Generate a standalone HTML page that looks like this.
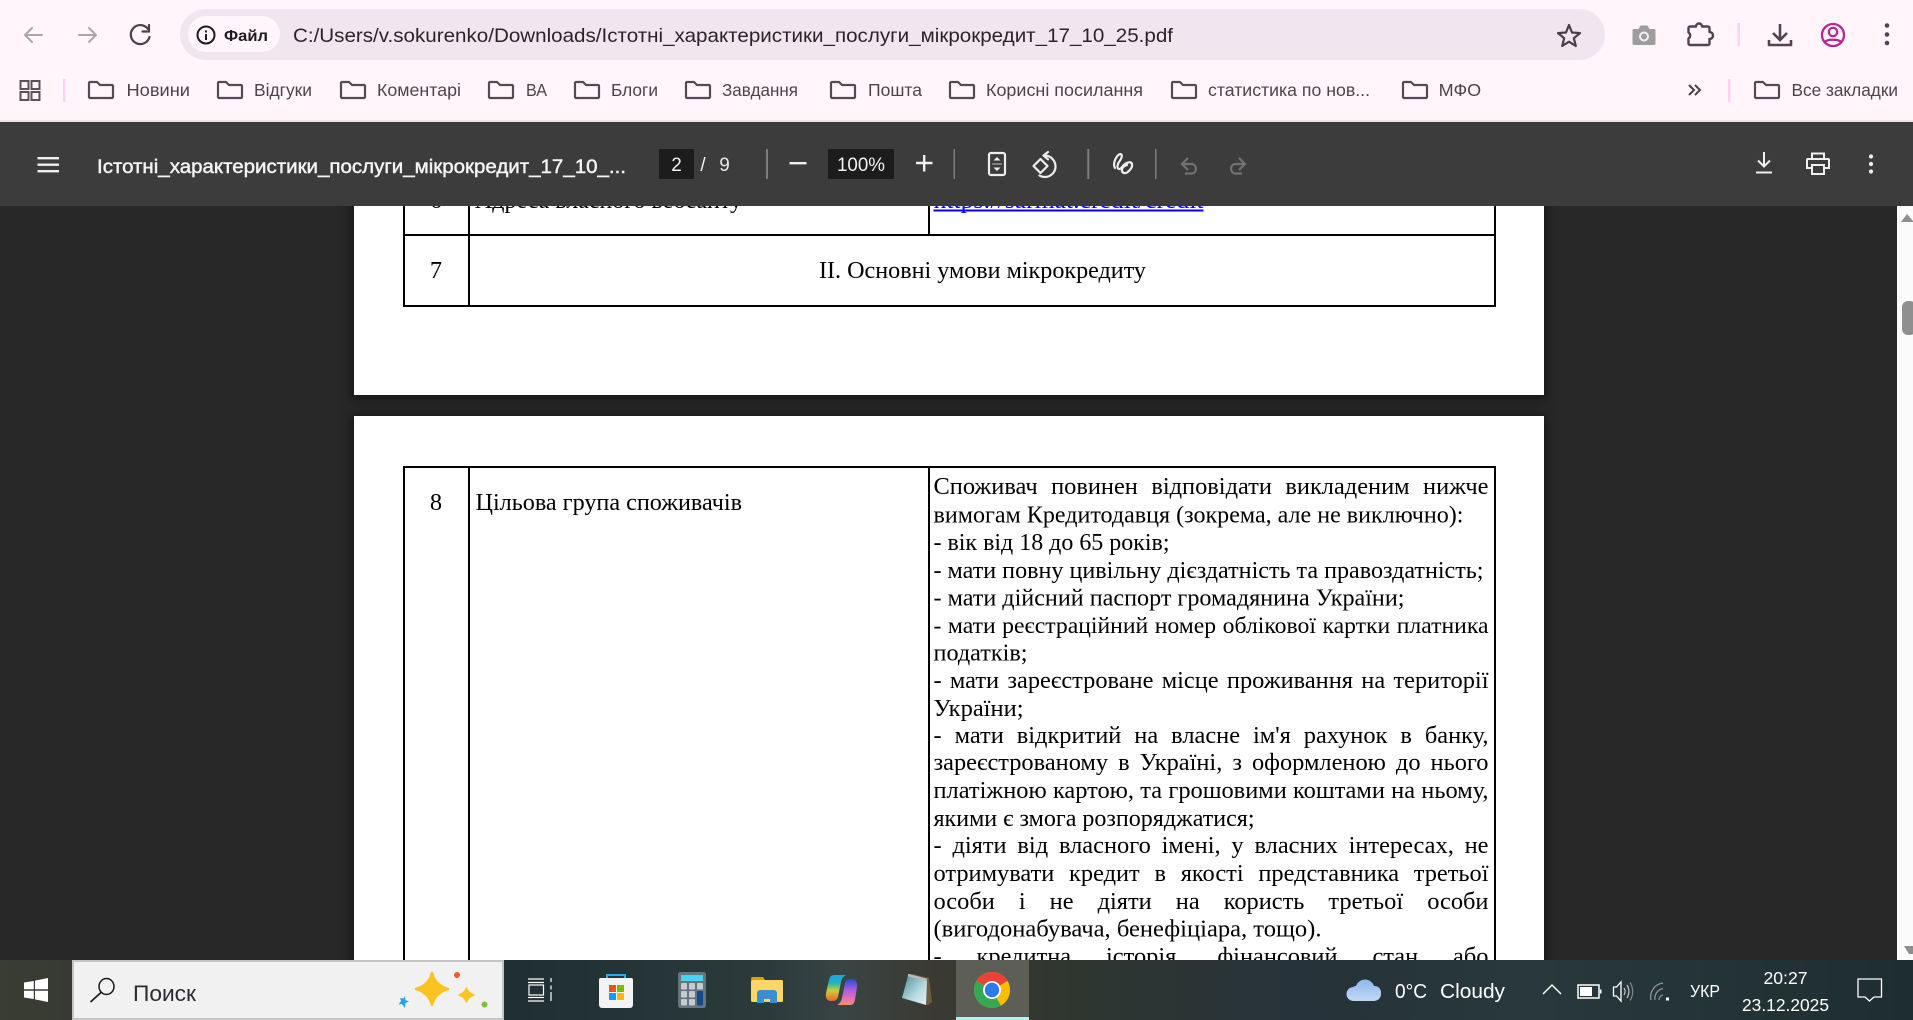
<!DOCTYPE html>
<html lang="uk"><head><meta charset="utf-8"><title>PDF</title>
<style>
html,body{margin:0;padding:0;width:1913px;height:1020px;overflow:hidden;background:#282828}
#pdf{position:absolute;left:0;top:0;width:1913px;height:1020px;overflow:hidden;background:#282828}
.page{position:absolute;left:354px;width:1190px;background:#fff;box-shadow:0 2px 10px 3px rgba(0,0,0,.45)}
.b{position:absolute;background:#000}
.j{position:absolute;left:933.5px;width:555px;height:28px;line-height:28px;font:24.4px/28px "Liberation Serif",serif;color:#000;text-align:justify;text-align-last:justify;white-space:nowrap}
svg{position:absolute;left:0;top:0;overflow:hidden}
.s{font-family:"Liberation Serif",serif;font-size:24.4px;fill:#000}
.u{font-family:"Liberation Sans",sans-serif}
.bm{font-size:17.5px;fill:#4f4348}
.f{fill:none;stroke:#564a50;stroke-width:2.2;stroke-linejoin:round}
</style></head><body>
<div id="pdf">
<div class="page" style="top:0;height:395px"></div>
<div class="page" style="top:416px;height:604px"></div>
<!-- table 1 -->
<div class="b" style="left:403px;top:190px;width:2px;height:117px"></div>
<div class="b" style="left:468px;top:190px;width:2px;height:117px"></div>
<div class="b" style="left:928px;top:190px;width:2px;height:45px"></div>
<div class="b" style="left:1494px;top:190px;width:2px;height:117px"></div>
<div class="b" style="left:403px;top:234px;width:1093px;height:2px"></div>
<div class="b" style="left:403px;top:305px;width:1093px;height:2px"></div>
<!-- table 2 -->
<div class="b" style="left:403px;top:466px;width:1093px;height:2px"></div>
<div class="b" style="left:403px;top:466px;width:2px;height:500px"></div>
<div class="b" style="left:468px;top:466px;width:2px;height:500px"></div>
<div class="b" style="left:928px;top:466px;width:2px;height:500px"></div>
<div class="b" style="left:1494px;top:466px;width:2px;height:500px"></div>
<div class="j" style="top:473px">Споживач повинен відповідати викладеним нижче</div>
<div class="j" style="top:611.5px;font-size:23.7px">- мати реєстраційний номер облікової картки платника</div>
<div class="j" style="top:666.5px">- мати зареєстроване місце проживання на території</div>
<div class="j" style="top:721.7px">- мати відкритий на власне ім'я рахунок в банку,</div>
<div class="j" style="top:749.3px">зареєстрованому в Україні, з оформленою до нього</div>
<div class="j" style="top:776.9px">платіжною картою, та грошовими коштами на ньому,</div>
<div class="j" style="top:832.4px">- діяти від власного імені, у власних інтересах, не</div>
<div class="j" style="top:860px">отримувати кредит в якості представника третьої</div>
<div class="j" style="top:887.5px">особи і не діяти на користь третьої особи</div>
<div class="j" style="top:942.5px">- кредитна історія, фінансовий стан або</div>
<!-- scrollbar -->
<div style="position:absolute;left:1897px;top:206px;width:16px;height:760px;background:#fbfbfb"></div>
<div style="position:absolute;left:1902px;top:301px;width:14px;height:34px;border-radius:6px;background:#8f8f8f"></div>
</div>

<svg width="1913" height="1020" viewBox="0 0 1913 1020" xmlns="http://www.w3.org/2000/svg">
<defs>
<linearGradient id="tb" x1="0" x2="1" y1="0" y2="0">
<stop offset="0" stop-color="#3a3d33"/><stop offset=".04" stop-color="#363a32"/><stop offset=".27" stop-color="#1f2f32"/><stop offset=".4" stop-color="#2c3a3b"/><stop offset=".44" stop-color="#394444"/><stop offset=".49" stop-color="#3a3a32"/><stop offset=".56" stop-color="#2f3630"/><stop offset=".68" stop-color="#26333a"/><stop offset=".8" stop-color="#28383c"/><stop offset="1" stop-color="#1e2e30"/>
</linearGradient>
<linearGradient id="cl" x1="0" x2="0" y1="0" y2="1"><stop offset="0" stop-color="#8db8ef"/><stop offset="1" stop-color="#c2d8f3"/></linearGradient>
<linearGradient id="cp" x1="0" x2="0" y1="0" y2="1"><stop offset="0" stop-color="#2050d0"/><stop offset=".4" stop-color="#a85be0"/><stop offset=".75" stop-color="#e66fb8"/><stop offset="1" stop-color="#f7906a"/></linearGradient>
<linearGradient id="cp2" x1="0" x2="0" y1="0" y2="1"><stop offset="0" stop-color="#1aa7e8"/><stop offset=".3" stop-color="#20b0c0"/><stop offset=".6" stop-color="#c8d030"/><stop offset="1" stop-color="#f0652f"/></linearGradient>
<linearGradient id="np" x1="0" x2="1" y1="0" y2="1"><stop offset="0" stop-color="#4f8c9a"/><stop offset=".6" stop-color="#b6dbe0"/><stop offset="1" stop-color="#e8f2f3"/></linearGradient>
</defs>

<!-- pdf non-justified text -->
<text class="s" x="475" y="208" textLength="267" lengthAdjust="spacingAndGlyphs">Адреса власного вебсайту</text>
<text class="s" x="436" y="208" text-anchor="middle">6</text>
<text class="s" x="933.5" y="208" textLength="270" lengthAdjust="spacingAndGlyphs" style="fill:#0000ff">https://sarmat.credit/credit</text>
<rect x="933.5" y="209.5" width="270" height="2" fill="#0000ff"/>
<text class="s" x="436" y="278" text-anchor="middle">7</text>
<text class="s" x="819" y="278" textLength="327" lengthAdjust="spacingAndGlyphs">II. Основні умови мікрокредиту</text>
<text class="s" x="436" y="510" text-anchor="middle">8</text>
<text class="s" x="475.5" y="510" textLength="266.5" lengthAdjust="spacingAndGlyphs">Цільова група споживачів</text>
<text class="s" x="933.5" y="522.6" textLength="530" lengthAdjust="spacingAndGlyphs">вимогам Кредитодавця (зокрема, але не виключно):</text>
<text class="s" x="933.5" y="550.2" textLength="236" lengthAdjust="spacingAndGlyphs">- вік від 18 до 65 років;</text>
<text class="s" x="933.5" y="577.8" textLength="550" lengthAdjust="spacingAndGlyphs">- мати повну цивільну дієздатність та правоздатність;</text>
<text class="s" x="933.5" y="605.4" textLength="471" lengthAdjust="spacingAndGlyphs">- мати дійсний паспорт громадянина України;</text>
<text class="s" x="933.5" y="660.6" textLength="94" lengthAdjust="spacingAndGlyphs">податків;</text>
<text class="s" x="933.5" y="715.8" textLength="90" lengthAdjust="spacingAndGlyphs">України;</text>
<text class="s" x="933.5" y="826.2" textLength="321" lengthAdjust="spacingAndGlyphs">якими є змога розпоряджатися;</text>
<text class="s" x="933.5" y="936.6" textLength="388" lengthAdjust="spacingAndGlyphs">(вигодонабувача, бенефіціара, тощо).</text>
<polygon points="1901,222 1907,214 1913,221 1913,222" fill="#8e8e8e"/>
<polygon points="1904,946 1913,946 1913,954 1909,954" fill="#8e8e8e"/>

<!-- chrome top -->
<rect width="1913" height="122" fill="#fff5fa"/>
<rect y="120" width="1913" height="2" fill="#f0e2e8"/>
<rect x="180" y="9" width="1425" height="51" rx="25.5" fill="#f0e6ef"/>
<rect x="188" y="16" width="92" height="36" rx="18" fill="#fff5fa"/>
<g fill="none" stroke-linecap="round" stroke-linejoin="round">
<path d="M42 35H25M32 28l-7 7 7 7" stroke="#aba5aa" stroke-width="2"/>
<path d="M79 35h17M89 28l7 7-7 7" stroke="#aba5aa" stroke-width="2"/>
<path d="M148 29a9.5 9.5 0 1 0 1.5 8" stroke="#4c3f4c" stroke-width="2.2"/>
<path d="M149 25v6.5h-6.5" stroke="#4c3f4c" stroke-width="2.2"/>
<circle cx="206" cy="35" r="8.5" stroke="#1f1a1f" stroke-width="2"/>
</g>
<rect x="205" y="34" width="2" height="6" fill="#1f1a1f"/><rect x="205" y="30.5" width="2" height="2" fill="#1f1a1f"/>
<text class="u" x="224" y="41" font-size="16" font-weight="700" fill="#1f1a1f" textLength="44" lengthAdjust="spacingAndGlyphs">Файл</text>
<text class="u" x="293" y="42" font-size="19.5" fill="#2a2429" textLength="880" lengthAdjust="spacingAndGlyphs">C:/Users/v.sokurenko/Downloads/Істотні_характеристики_послуги_мікрокредит_17_10_25.pdf</text>
<path d="M1569 25l3 7.5 8 .6-6.2 5.1 2 7.8-6.800-4.300-6.800 4.300 2-7.800-6.200-5.100 8-.6z" fill="none" stroke="#4a3f47" stroke-width="2.200" stroke-linejoin="round"/>
<g transform="translate(-4 0)">
<path d="M1638 29h4.500l2-3.500h7l2 3.500h4.500a1.500 1.500 0 0 1 1.500 1.500v13a1.500 1.500 0 0 1-1.500 1.500h-20a1.500 1.500 0 0 1-1.500-1.500v-13a1.500 1.500 0 0 1 1.500-1.500z" fill="#9d9d9d"/>
<circle cx="1648" cy="36.500" r="5" fill="#f6eef2"/><circle cx="1648" cy="36.500" r="3" fill="#9d9d9d"/>
</g>
<path d="M1690 26.500h6a3 3 0 0 1 6 0h6a1.500 1.500 0 0 1 1.500 1.500v4a3.500 3.500 0 0 1 0 7v4.500a1.500 1.500 0 0 1-1.500 1.500h-18a1.500 1.500 0 0 1-1.500-1.500v-5a3.500 3.500 0 0 0 0-6v-4.500a1.500 1.500 0 0 1 1.500-1.500z" fill="none" stroke="#55414f" stroke-width="2.400" stroke-linejoin="round"/>
<rect x="1737.500" y="23" width="2.500" height="23" fill="#f9d5ee"/>
<path d="M1780 24v15M1773 33l7 7 7-7" fill="none" stroke="#55414f" stroke-width="2.600"/>
<path d="M1769 40v5h22v-5" fill="none" stroke="#55414f" stroke-width="2.600" stroke-linejoin="round"/>
<circle cx="1833" cy="35" r="11" fill="none" stroke="#b8258f" stroke-width="2.300"/><circle cx="1833" cy="32" r="4.200" fill="none" stroke="#b8258f" stroke-width="2.200"/><path d="M1825 42c2-3 14-3 16 0" fill="none" stroke="#b8258f" stroke-width="2.200"/>
<g fill="#55414f"><circle cx="1887" cy="25.500" r="2.300"/><circle cx="1887" cy="34.500" r="2.300"/><circle cx="1887" cy="43" r="2.300"/></g>

<!-- bookmarks -->
<g fill="none" stroke="#5a5055" stroke-width="2"><rect x="20.500" y="81" width="8" height="8"/><rect x="31.500" y="81" width="8" height="8"/><rect x="20.500" y="92" width="8" height="8"/><rect x="31.500" y="92" width="8" height="8"/></g>
<rect x="63" y="79" width="2.500" height="23" fill="#f9d5ee"/>
<defs><path id="fld" d="M-11-8h7l3 3h12a1 1 0 0 1 1 1V7a1 1 0 0 1-1 1h-22a1 1 0 0 1-1-1V-7a1 1 0 0 1 1-1z"/></defs>
<g class="f">
<use href="#fld" x="101" y="90"/><use href="#fld" x="230" y="90"/><use href="#fld" x="353" y="90"/><use href="#fld" x="501" y="90"/><use href="#fld" x="587" y="90"/><use href="#fld" x="698" y="90"/><use href="#fld" x="843" y="90"/><use href="#fld" x="962" y="90"/><use href="#fld" x="1184" y="90"/><use href="#fld" x="1415" y="90"/><use href="#fld" x="1767" y="90"/>
</g>
<g class="u bm">
<text x="126.500" y="96" textLength="63.500" lengthAdjust="spacingAndGlyphs">Новини</text>
<text x="254" y="96" textLength="58" lengthAdjust="spacingAndGlyphs">Відгуки</text>
<text x="377" y="96" textLength="84" lengthAdjust="spacingAndGlyphs">Коментарі</text>
<text x="526" y="96" textLength="21" lengthAdjust="spacingAndGlyphs">ВА</text>
<text x="611" y="96" textLength="47" lengthAdjust="spacingAndGlyphs">Блоги</text>
<text x="722" y="96" textLength="76" lengthAdjust="spacingAndGlyphs">Завдання</text>
<text x="868" y="96" textLength="54" lengthAdjust="spacingAndGlyphs">Пошта</text>
<text x="986" y="96" textLength="157" lengthAdjust="spacingAndGlyphs">Корисні посилання</text>
<text x="1208" y="96" textLength="162" lengthAdjust="spacingAndGlyphs">статистика по нов...</text>
<text x="1438.700" y="96" textLength="42.500" lengthAdjust="spacingAndGlyphs">МФО</text>
<text x="1791.500" y="96" textLength="106.500" lengthAdjust="spacingAndGlyphs">Все закладки</text>
</g>
<path d="M1689 85l5 5-5 5M1695 85l5 5-5 5" fill="none" stroke="#4a3f47" stroke-width="2"/>
<rect x="1728" y="79" width="2.500" height="23" fill="#f9d5ee"/>

<!-- pdf toolbar -->
<rect y="122" width="1913" height="84" fill="#3c3c3c"/>
<g fill="#efefef"><rect x="37.500" y="157" width="21.500" height="2.400"/><rect x="37.500" y="163.500" width="21.500" height="2.400"/><rect x="37.500" y="170" width="21.500" height="2.400"/></g>
<text class="u" x="97" y="173" font-size="19" fill="#f4f4f4" stroke="#f4f4f4" stroke-width=".45" textLength="529" lengthAdjust="spacingAndGlyphs">Істотні_характеристики_послуги_мікрокредит_17_10_...</text>
<rect x="659" y="149" width="35" height="30" fill="#1c1c1c"/>
<text class="u" x="676.500" y="171" font-size="19" fill="#f2f2f2" text-anchor="middle">2</text>
<text class="u" x="703" y="171" font-size="19" fill="#f2f2f2" text-anchor="middle">/</text>
<text class="u" x="724.500" y="171" font-size="19" fill="#e8e8e8" text-anchor="middle">9</text>
<rect x="766" y="149" width="2" height="30" fill="#7d7d7d"/>
<rect x="789.500" y="162" width="17" height="2.400" fill="#efefef"/>
<rect x="828" y="149" width="66" height="30" fill="#1c1c1c"/>
<text class="u" x="861" y="171" font-size="19" fill="#f2f2f2" text-anchor="middle" textLength="48" lengthAdjust="spacingAndGlyphs">100%</text>
<path d="M916 163h16.500M924.200 155v16.500" stroke="#efefef" stroke-width="2.400" fill="none"/>
<rect x="953.500" y="149" width="1.500" height="30" fill="#7d7d7d"/>
<rect x="989" y="153" width="16" height="22" rx="2" fill="none" stroke="#eee" stroke-width="2.200"/>
<path d="M993.500 160.500l3.500-3.500 3.500 3.500zM993.500 167.500l3.500 3.500 3.500-3.500z" fill="#eee"/><rect x="992" y="163.300" width="10" height="1.400" fill="#9a9a9a"/>
<path d="M1033.500 166l7-7 7 7-7 7z" fill="none" stroke="#eee" stroke-width="2.200" stroke-linejoin="round"/>
<path d="M1044 155.500a11 11 0 0 1 11.500 11c0 6-5 10.500-10.500 10.500-2 0-4-.5-5.500-1.500" fill="none" stroke="#eee" stroke-width="2.200" stroke-linecap="round"/>
<path d="M1048 152l-4.500 3.500 4.500 3.800" fill="none" stroke="#eee" stroke-width="2.200" stroke-linecap="round" stroke-linejoin="round"/>
<rect x="1087.300" y="149" width="2" height="30" fill="#7d7d7d"/>
<path d="M1115 168c-3-5 2-13 5-14 3 0 2 4-1 8-3 5-1 10 3 5 4-5 9-6 10-3 1 4-5 10-8 9-4-1-2-7 3-8" fill="none" stroke="#eee" stroke-width="2.200" stroke-linecap="round" stroke-linejoin="round"/>
<rect x="1155" y="149" width="1.500" height="30" fill="#7d7d7d"/>
<path d="M1182 164h10.500a5 5 0 0 1 0 9.500H1185M1188 158l-6 6 6 6" fill="none" stroke="#727272" stroke-width="2.200"/>
<path d="M1245 164h-10.500a5 5 0 0 0 0 9.500h7.500M1239 158l6 6-6 6" fill="none" stroke="#727272" stroke-width="2.200"/>
<path d="M1764 152v14M1758 160.500l6 6 6-6M1756 172.500h16" fill="none" stroke="#efefef" stroke-width="2"/>
<g transform="translate(-6 0)"><path d="M1818 160v-6.500h12v6.500M1818 168h-5v-8a1 1 0 0 1 1-1h20a1 1 0 0 1 1 1v8h-5M1818 165h12v9h-12z" fill="none" stroke="#efefef" stroke-width="2"/></g>
<g fill="#efefef"><circle cx="1871" cy="156.500" r="2.100"/><circle cx="1871" cy="164" r="2.100"/><circle cx="1871" cy="171.500" r="2.100"/></g>

<!-- taskbar -->
<rect y="960" width="1913" height="60" fill="url(#tb)"/>
<rect x="73" y="961" width="430" height="58" fill="#f1f1f1" stroke="#c4c4c4" stroke-width="2"/>
<polygon points="24,982.500 33.800,981 33.800,989.200 24,989.200" fill="#fff"/><polygon points="35,980.600 48,978 48,989.200 35,989.200" fill="#fff"/><polygon points="24,990.800 33.800,990.800 33.800,999 24,997.500" fill="#fff"/><polygon points="35,990.800 48,990.800 48,1002 35,999.400" fill="#fff"/>
<ellipse cx="106.500" cy="986.500" rx="7.500" ry="8" fill="none" stroke="#1a1a1a" stroke-width="1.500"/><path d="M101 992.500L90.500 1002" stroke="#1a1a1a" stroke-width="1.700"/>
<text class="u" x="133" y="1001" font-size="22" fill="#2b2b33" textLength="63" lengthAdjust="spacingAndGlyphs">Поиск</text>
<path d="M432 973Q435 985 448 989Q435 993 432 1005Q429 993 416 989Q429 985 432 973z" fill="#fbc322" stroke="#fbc322" stroke-width="2.500" stroke-linejoin="round"/>
<path d="M466.500 988Q468 993 474 995Q468 997 466.500 1002Q465 997 459 995Q465 993 466.500 988z" fill="#fbc322" stroke="#fbc322" stroke-width="1.500" stroke-linejoin="round"/>
<path d="M405 996l.5 4 3.500 1.500-3.500 1.500-.5 5-3-4-3.500.5 2.500-3.500-1-3 3.500.5z" fill="#1ea7f0"/>
<circle cx="457" cy="975" r="3" fill="#f45a25"/><circle cx="484.500" cy="1004.500" r="3" fill="#7cc233"/>
<g fill="none" stroke="#fff" stroke-width="1.200">
<path d="M528 979h16M528 982.500h16M528 1001h16M528 997.500h16"/><rect x="529" y="985" width="14.500" height="10"/><path d="M551 978v4M551 985.500v4M551 992v9"/>
</g>
<path d="M607 978v-3h18v3" fill="none" stroke="#28a9f0" stroke-width="2"/>
<path d="M601 978h30a2 2 0 0 1 2 2v25a3 3 0 0 1-3 3h-28a3 3 0 0 1-3-3v-25a2 2 0 0 1 2-2z" fill="#f3f3f3"/>
<rect x="609" y="985" width="7" height="7" fill="#f25022"/><rect x="617" y="985" width="7" height="7" fill="#7fba00"/><rect x="609" y="993" width="7" height="7" fill="#00a4ef"/><rect x="617" y="993" width="7" height="7" fill="#ffb900"/>
<rect x="678" y="972" width="28" height="36" rx="2.500" fill="#68757f"/><rect x="681" y="975" width="22" height="6" fill="#49d3f2"/>
<g fill="#c6cbd0"><rect x="681" y="983" width="6" height="6.500" rx="1"/><rect x="689" y="983" width="6" height="6.500" rx="1"/><rect x="697" y="983" width="6" height="6.500" rx="1"/><rect x="681" y="991" width="6" height="6.500" rx="1"/><rect x="689" y="991" width="6" height="6.500" rx="1"/><rect x="681" y="999" width="6" height="6.500" rx="1"/><rect x="689" y="999" width="6" height="6.500" rx="1"/></g><rect x="697" y="991" width="6" height="14.500" rx="1" fill="#124a8c"/>
<path d="M751 979a2 2 0 0 1 2-2h10l2 3h-14z" fill="#d9a40a"/><rect x="751" y="980" width="32" height="22" rx="1.500" fill="#fdd667"/><path d="M757 1003v-10a3 3 0 0 1 3-3h14a3 3 0 0 1 3 3v10h-7v-4h-6v4z" fill="#3a8fd0"/>
<path d="M834 975h12q-4 2-5 7l-3 15q-1 4-6 4h-2q-5-1-4-8l3-13q1-5 5-5z" fill="url(#cp2)"/>
<path d="M850 1005h-13q4-2 5-7l3-15q1-4 6-4h1q6 1 5 8l-2 13q-1 5-5 5z" fill="url(#cp)"/>
<path d="M912 974l17 4 3 24-4 3-26-7z" fill="#8d7a4f" opacity=".6"/><path d="M908 976l19 5-1 24-24-7 6-22z" fill="url(#np)"/><path d="M908 975l19 5" stroke="#bbb" stroke-width="2.500"/>
<rect x="956" y="960" width="73" height="57" fill="#5d5f57"/><rect x="956" y="1017" width="73" height="3" fill="#b4f0f5"/>
<circle cx="992" cy="990" r="18" fill="#fbbc04"/>
<path d="M992 990L976.400 981A18 18 0 0 1 1007.600 981z" fill="#ea4335"/>
<path d="M992 990L1001 1005.600A18 18 0 0 1 976.400 981z" fill="#34a853"/>
<path d="M992 990L1007.600 981A18 18 0 0 1 1001 1005.600z" fill="#fbbc04"/>
<circle cx="992" cy="990" r="9" fill="#fff"/><circle cx="992" cy="990" r="7.200" fill="#2f7ae8"/>
<path d="M1354 1001a7 7 0 0 1-1-14 6 6 0 0 1 3-1 9.500 9.500 0 0 1 18 0 6.500 6.500 0 0 1 7 7.500 7 7 0 0 1-7 7.500z" fill="url(#cl)"/>
<text class="u" x="1395" y="998" font-size="20" fill="#fff" textLength="32" lengthAdjust="spacingAndGlyphs">0°C</text>
<text class="u" x="1440" y="998" font-size="20" fill="#fff" textLength="65" lengthAdjust="spacingAndGlyphs">Cloudy</text>
<path d="M1543 994l9-9 9 9" fill="none" stroke="#fff" stroke-width="1.500"/>
<rect x="1578" y="985" width="21" height="13" fill="none" stroke="#fff" stroke-width="1.500"/><rect x="1580" y="987" width="12" height="9" fill="#fff"/><rect x="1600" y="989.500" width="1.500" height="4" fill="#fff"/>
<g transform="translate(-4 0)"><path d="M1617.500 987h3l4.500-5v19l-4.500-5h-3z" fill="none" stroke="#fff" stroke-width="1.300"/><path d="M1628 988c1.500 2 1.500 5 0 7M1631 985c2.500 4 2.500 9 0 13" fill="none" stroke="#c9c9c9" stroke-width="1.200"/><path d="M1634 982.500c3.500 5 3.500 13 0 18" fill="none" stroke="#888" stroke-width="1.200"/></g>
<g transform="translate(-5 0)"><g fill="none" stroke="#8f9597" stroke-width="1.300"><path d="M1656 1000a14 14 0 0 1 12-17"/><path d="M1660 1000a10 10 0 0 1 8-11.500"/><path d="M1664 1000a5 5 0 0 1 4-5"/></g><rect x="1671" y="997.500" width="3" height="3" fill="#fff"/></g>
<text class="u" x="1690" y="997" font-size="17.500" fill="#fff" textLength="30" lengthAdjust="spacingAndGlyphs">УКР</text>
<text class="u" x="1763.500" y="984" font-size="17.500" fill="#fff" textLength="44" lengthAdjust="spacingAndGlyphs">20:27</text>
<text class="u" x="1742" y="1011" font-size="17.500" fill="#fff" textLength="87" lengthAdjust="spacingAndGlyphs">23.12.2025</text>
<path d="M1858 979h23.500v18h-7.500l-4.500 4-4.500-4h-7z" fill="none" stroke="#fff" stroke-width="1.300"/>
</svg>
</body></html>
